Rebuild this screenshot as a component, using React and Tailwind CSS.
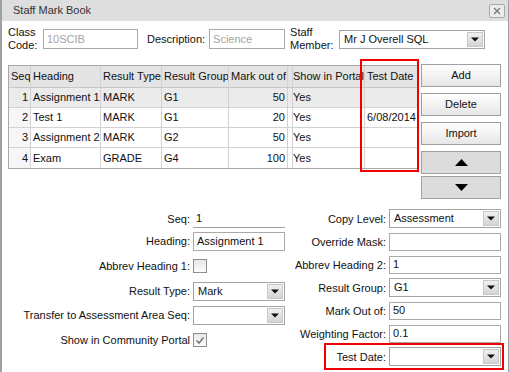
import React from 'react';

const rows = [
  { seq: 1, heading: 'Assignment 1', type: 'MARK', group: 'G1', outOf: 50, portal: 'Yes', date: '' },
  { seq: 2, heading: 'Test 1', type: 'MARK', group: 'G1', outOf: 20, portal: 'Yes', date: '6/08/2014' },
  { seq: 3, heading: 'Assignment 2', type: 'MARK', group: 'G2', outOf: 50, portal: 'Yes', date: '' },
  { seq: 4, heading: 'Exam', type: 'GRADE', group: 'G4', outOf: 100, portal: 'Yes', date: '' },
];

function Arrow() {
  return (
    <svg width="8" height="5" viewBox="0 0 8 5">
      <path d="M0 0.5h8L4 4.5z" fill="#111" />
    </svg>
  );
}

function Select({ value, className = '' }) {
  return (
    <div className={`flex items-stretch border border-[#a3a3a3] bg-white p-[1px] ${className}`}>
      <div className="flex-1 flex items-center pl-[3px] overflow-hidden whitespace-nowrap">{value}</div>
      <div className="w-[16px] border border-[#c8c8c8] bg-gradient-to-b from-[#f0f0f0] to-[#d4d4d4] flex items-center justify-center">
        <Arrow />
      </div>
    </div>
  );
}

function Input({ value, className = '', muted }) {
  return (
    <div className={`flex items-center border border-[#a9a9a9] bg-white pl-[3px] whitespace-nowrap overflow-hidden ${muted ? 'text-[#a3a3a3]' : ''} ${className}`}>
      {value}
    </div>
  );
}

function Checkbox({ checked }) {
  return (
    <div className="w-[14px] h-[14px] border border-[#8e8e8e] bg-gradient-to-b from-[#e8e8e8] to-[#fbfbfb] flex items-center justify-center">
      {checked && (
        <svg width="10" height="9" viewBox="0 0 10 9">
          <path d="M1.5 4.5l2.5 2.5 4.5-5.5" stroke="#7a7a7a" strokeWidth="1.6" fill="none" />
        </svg>
      )}
    </div>
  );
}

function Button({ children, dark }) {
  return (
    <button
      className={`w-[80px] h-[23px] border border-[#a0a0a0] flex items-center justify-center ${
        dark ? 'bg-[#dcdcdc]' : 'bg-gradient-to-b from-[#ffffff] to-[#e6e6e6]'
      }`}
    >
      {children}
    </button>
  );
}

function LeftRow({ label, children, className = '' }) {
  return (
    <div className={`flex items-center h-[22px] ${className}`}>
      <div className="w-[191px] text-right pr-[3px] whitespace-nowrap">{label}</div>
      <div className="w-[92px] flex items-center">{children}</div>
    </div>
  );
}

function RightRow({ label, children }) {
  return (
    <div className="flex items-center h-[23px]">
      <div className="w-[104px] text-right pr-[3px] whitespace-nowrap pt-[2px]">{label}</div>
      <div className="w-[112px]">{children}</div>
    </div>
  );
}

const cols = 'grid grid-cols-[22px_70px_61px_67px_59px_3px_74px_52px]';
const cell = 'border-r border-[#d2d2d2] px-[2px] flex items-center whitespace-nowrap overflow-hidden';

export default function App() {
  return (
    <div className="relative w-[509px] h-[372px] overflow-hidden bg-white border-l-2 border-r border-[#a0a0a0] text-[11px] text-[#111] font-['Liberation_Sans',Arial,sans-serif]">
      {/* Title bar */}
      <div className="h-[21px] bg-[#dedede] flex items-center justify-between pl-[11px] pr-[3px]">
        <span className="text-[#333]">Staff Mark Book</span>
        <div className="w-[16px] h-[14px] border border-[#a8a8a8] rounded-[2px] bg-[#ececec] flex items-center justify-center">
          <svg width="8" height="8" viewBox="0 0 8 8">
            <path d="M1 1l6 6M7 1l-6 6" stroke="#777" strokeWidth="1.4" />
          </svg>
        </div>
      </div>

      {/* Header fields */}
      <div className="flex items-start h-[38px] pt-[5px] pl-[6px]">
        <div className="w-[35px] leading-[13px]">
          <div>Class</div>
          <div>Code:</div>
        </div>
        <Input value="10SCIB" muted className="w-[95px] h-[20px] mt-[3px]" />
        <div className="ml-[9px] h-[20px] mt-[3px] flex items-center">Description:</div>
        <Input value="Science" muted className="ml-[4px] w-[76px] h-[20px] mt-[3px]" />
        <div className="ml-[5px] w-[49px] leading-[13px]">
          <div>Staff</div>
          <div>Member:</div>
        </div>
        <Select value="Mr J Overell SQL" className="w-[146px] h-[19px] mt-[4px]" />
      </div>

      {/* Grid + buttons */}
      <div className="flex items-start h-[146px] pl-[6px]">
        <div className="mt-[6px] border border-[#a8a8a8]">
          <div className={`${cols} h-[22px] bg-[#e4e4e4] border-b border-[#c8c8c8]`}>
            <div className={cell}>Seq</div>
            <div className={cell}>Heading</div>
            <div className={cell}>Result Type</div>
            <div className={cell}>Result Group</div>
            <div className={cell}>Mark out of</div>
            <div className={cell + ' px-0'}></div>
            <div className={cell}>Show in Portal</div>
            <div className={cell + ' border-r-0'}>Test Date</div>
          </div>
          {rows.map((r, i) => (
            <div
              key={r.seq}
              className={`${cols} h-[20px] ${i < rows.length - 1 ? 'border-b' : ''} border-[#d2d2d2] ${
                i === 0 ? 'bg-[#ebebeb]' : 'bg-white'
              }`}
            >
              <div className={`${cell} justify-end ${i === 0 ? '' : 'bg-[#f6f6f6]'}`}>{r.seq}</div>
              <div className={cell}>{r.heading}</div>
              <div className={cell}>{r.type}</div>
              <div className={cell}>{r.group}</div>
              <div className={`${cell} justify-end`}>{r.outOf}</div>
              <div className={cell + ' px-0'}></div>
              <div className={cell}>{r.portal}</div>
              <div className={cell + ' border-r-0'}>{r.date}</div>
            </div>
          ))}
        </div>

        <div className="ml-[3px] mt-[5px] flex flex-col">
          <Button>Add</Button>
          <div className="mt-[6px]"><Button>Delete</Button></div>
          <div className="mt-[6px]"><Button>Import</Button></div>
          <div className="mt-[6px]">
            <Button dark>
              <svg width="13" height="7" viewBox="0 0 13 7"><path d="M0 7h13L6.5 0z" fill="#000" /></svg>
            </Button>
          </div>
          <div className="mt-[2px]">
            <Button dark>
              <svg width="13" height="7" viewBox="0 0 13 7"><path d="M0 0h13L6.5 7z" fill="#000" /></svg>
            </Button>
          </div>
        </div>
      </div>

      {/* Detail form */}
      <div className="flex pt-[2px]">
        <div className="pt-[1px]">
          <LeftRow label="Seq:">
            <div className="w-full h-[18px] border-b border-[#a0a0a0] pl-[3px] flex items-center">1</div>
          </LeftRow>
          <LeftRow label="Heading:">
            <Input value="Assignment 1" className="w-full h-[19px]" />
          </LeftRow>
          <LeftRow label="Abbrev Heading 1:" className="mt-[2px] h-[24px]">
            <Checkbox />
          </LeftRow>
          <LeftRow label="Result Type:" className="mt-[2px]">
            <Select value="Mark" className="w-full h-[19px]" />
          </LeftRow>
          <LeftRow label="Transfer to Assessment Area Seq:" className="mt-[2px]">
            <Select value="" className="w-full h-[19px]" />
          </LeftRow>
          <LeftRow label="Show in Community Portal" className="mt-[3px]">
            <Checkbox checked />
          </LeftRow>
        </div>

        <div>
          <RightRow label="Copy Level:">
            <Select value="Assessment" className="h-[19px]" />
          </RightRow>
          <RightRow label="Override Mask:">
            <Input value="" className="h-[18px]" />
          </RightRow>
          <RightRow label="Abbrev Heading 2:">
            <Input value="1" className="h-[18px]" />
          </RightRow>
          <RightRow label="Result Group:">
            <Select value="G1" className="h-[19px]" />
          </RightRow>
          <RightRow label="Mark Out of:">
            <Input value="50" className="h-[18px]" />
          </RightRow>
          <RightRow label="Weighting Factor:">
            <Input value="0.1" className="h-[18px]" />
          </RightRow>
          <RightRow label="Test Date:">
            <Select value="" className="h-[19px]" />
          </RightRow>
        </div>
      </div>

      {/* Highlight boxes */}
      <div className="absolute left-[358px] top-[59px] w-[59px] h-[113px] border-2 border-[#f00000]" />
      <div className="absolute left-[322px] top-[343px] w-[180px] h-[27px] border-2 border-[#f00000]" />
    </div>
  );
}
